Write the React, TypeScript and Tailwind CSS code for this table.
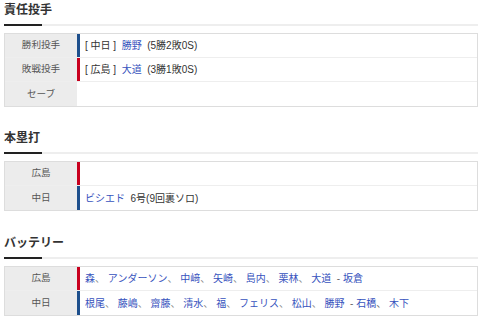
import React from "react";

type Team = "carp" | "dragons";

type Row = {
  label: string;
  team?: Team;
  content?: React.ReactNode;
};

const barColor: Record<Team, string> = {
  carp: "bg-[#c8001e]",
  dragons: "bg-[#1d4f8c]",
};

function Link({ children }: { children: React.ReactNode }) {
  return <span className="text-[#3652bd]">{children}</span>;
}

function Names({ names, relief }: { names: string[]; relief: string[] }) {
  return (
    <>
      {names.map((name, i) => (
        <React.Fragment key={name}>
          {i > 0 && <span className="text-[#888]">、 </span>}
          <Link>{name}</Link>
        </React.Fragment>
      ))}
      {relief.map((name, i) => (
        <React.Fragment key={name}>
          <span className="text-[#666]">{i === 0 ? "  - " : "、 "}</span>
          <Link>{name}</Link>
        </React.Fragment>
      ))}
    </>
  );
}

function Section({ title, rows, className = "" }: { title: string; rows: Row[]; className?: string }) {
  return (
    <section className={className}>
      <h2 className="pb-[4px] text-[12px] font-bold leading-[20px] text-[#333]">{title}</h2>
      <div className="flex h-[2px]">
        <div className="w-[38px] bg-[#222]" />
        <div className="flex-1 bg-[#eeeeee]" />
      </div>
      <div className="mt-[7px] border border-[#dddddd]">
        {rows.map((row, i) => (
          <div
            key={row.label}
            className={`flex h-[24px] ${i < rows.length - 1 ? "border-b border-[#eeeeee]" : ""}`}
          >
            <div className="flex w-[72px] items-center justify-center bg-[#ececec] text-[9.6px] text-[#555]">
              {row.label}
            </div>
            <div className={`w-[3px] ${row.team ? barColor[row.team] : "bg-white"}`} />
            <div className="flex flex-1 items-center whitespace-pre pl-[5px] text-[10px] text-[#333]">
              {row.content}
            </div>
          </div>
        ))}
      </div>
    </section>
  );
}

export default function App() {
  return (
    <div
      className="bg-white pl-[4px] pr-[2px]"
      style={{ fontFamily: '"Liberation Sans", "Noto Sans CJK JP", sans-serif' }}
    >
      <Section
        title="責任投手"
        rows={[
          {
            label: "勝利投手",
            team: "dragons",
            content: (
              <>
                {"[ 中日 ]  "}
                <Link>勝野</Link>
                {"  (5勝2敗0S)"}
              </>
            ),
          },
          {
            label: "敗戦投手",
            team: "carp",
            content: (
              <>
                {"[ 広島 ]  "}
                <Link>大道</Link>
                {"  (3勝1敗0S)"}
              </>
            ),
          },
          { label: "セーブ" },
        ]}
      />
      <Section
        className="mt-[21px]"
        title="本塁打"
        rows={[
          { label: "広島", team: "carp" },
          {
            label: "中日",
            team: "dragons",
            content: (
              <>
                <Link>ビシエド</Link>
                {"  6号(9回裏ソロ)"}
              </>
            ),
          },
        ]}
      />
      <Section
        className="mt-[22px]"
        title="バッテリー"
        rows={[
          {
            label: "広島",
            team: "carp",
            content: (
              <Names
                names={["森", "アンダーソン", "中﨑", "矢崎", "島内", "栗林", "大道"]}
                relief={["坂倉"]}
              />
            ),
          },
          {
            label: "中日",
            team: "dragons",
            content: (
              <Names
                names={["根尾", "藤嶋", "齋藤", "清水", "福", "フェリス", "松山", "勝野"]}
                relief={["石橋", "木下"]}
              />
            ),
          },
        ]}
      />
    </div>
  );
}
